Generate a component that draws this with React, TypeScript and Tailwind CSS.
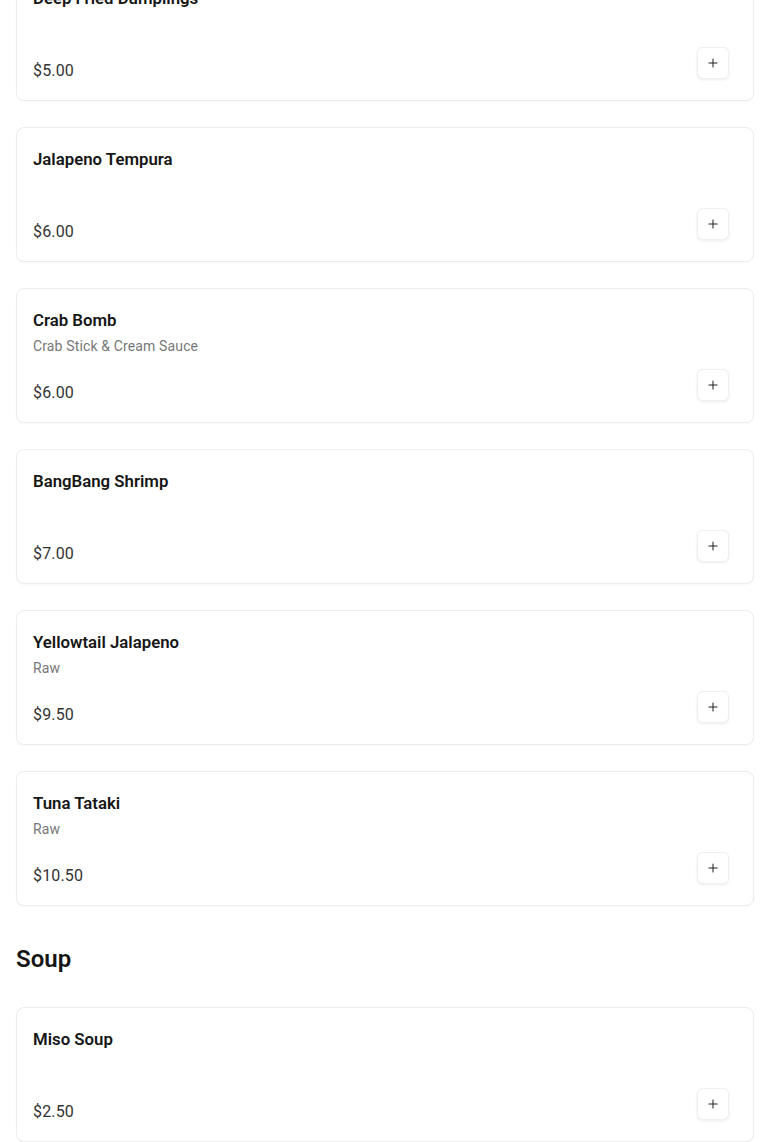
import { Plus } from "lucide-react";

type Item = { name: string; desc?: string; price: string };

const appetizers: Item[] = [
  { name: "Deep Fried Dumplings", price: "$5.00" },
  { name: "Jalapeno Tempura", price: "$6.00" },
  { name: "Crab Bomb", desc: "Crab Stick & Cream Sauce", price: "$6.00" },
  { name: "BangBang Shrimp", price: "$7.00" },
  { name: "Yellowtail Jalapeno", desc: "Raw", price: "$9.50" },
  { name: "Tuna Tataki", desc: "Raw", price: "$10.50" },
];

const soup: Item[] = [{ name: "Miso Soup", price: "$2.50" }];

function MenuCard({ item }: { item: Item }) {
  return (
    <div className="flex justify-between rounded-lg border border-[#ececec] bg-white px-4 pt-[17px] pb-[17px] shadow-[0_1px_2px_rgba(0,0,0,0.03)]">
      <div className="flex flex-col">
        <div className="text-[16.8px] font-semibold leading-7 text-[#161616]">{item.name}</div>
        <div className="mt-[2px] min-h-5 text-sm leading-5 tracking-[0.01em] text-[#777]">{item.desc}</div>
        <div className="mt-[25px] text-base leading-6 tracking-[0.01em] text-[#333]">{item.price}</div>
      </div>
      <div className="flex flex-col justify-end pb-1">
        <button className="mr-2 flex h-8 w-8 items-center justify-center rounded-md border border-[#f0f0f0] bg-white shadow-[0_1px_3px_rgba(0,0,0,0.08)]">
          <Plus size={14} strokeWidth={1.75} className="text-[#222]" />
        </button>
      </div>
    </div>
  );
}

export default function App() {
  return (
    <div className="min-h-screen bg-white font-['Roboto','Liberation_Sans',sans-serif]">
      <div className="-mt-[34px] px-4">
        <div className="space-y-[26px]">
          {appetizers.map((item) => (
            <MenuCard key={item.name} item={item} />
          ))}
        </div>
        <h2 className="mt-[37px] mb-8 text-2xl leading-8 font-semibold text-[#161616]">Soup</h2>
        <div className="space-y-[26px]">
          {soup.map((item) => (
            <MenuCard key={item.name} item={item} />
          ))}
        </div>
      </div>
    </div>
  );
}
